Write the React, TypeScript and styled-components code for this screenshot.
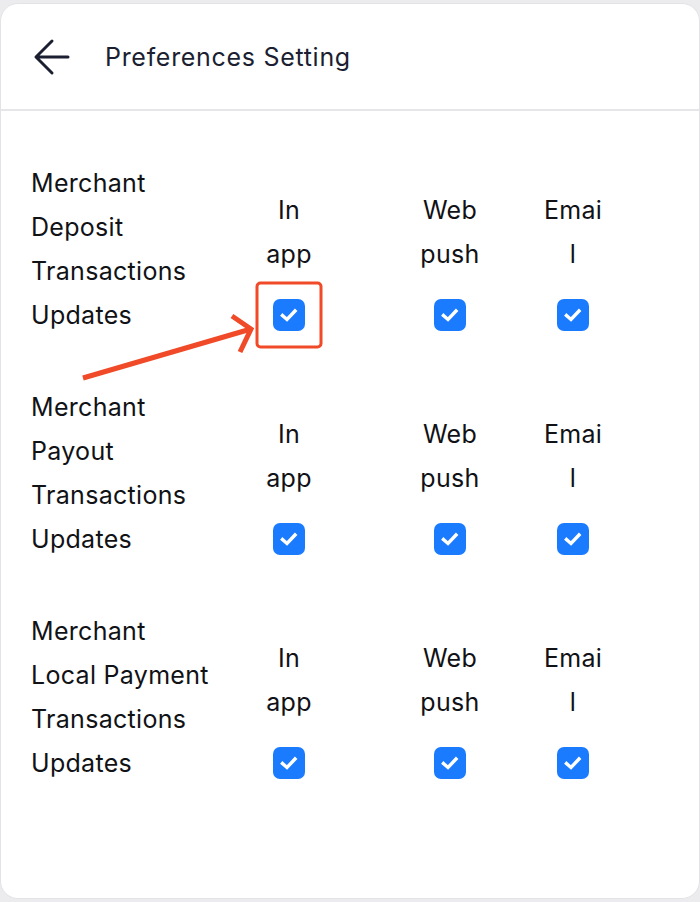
import React from "react";
import styled, { createGlobalStyle } from "styled-components";

const Global = createGlobalStyle`
  html, body { margin: 0; padding: 0; background: #ececef; }
  body { font-family: Inter, "Liberation Sans", sans-serif; }
  * { box-sizing: border-box; }
`;

const Card = styled.div`
  position: relative;
  margin-top: 3px;
  height: 896px;
  background: #fff;
  border: 1px solid #e3e3e7;
  border-radius: 18px;
  overflow: hidden;
`;

const Header = styled.div`
  height: 107px;
  display: flex;
  align-items: center;
  padding-left: 32px;
  gap: 34px;
  border-bottom: 2px solid #e6e6ea;
`;

const BackButton = styled.button`
  width: 38px;
  height: 38px;
  border: 0;
  padding: 0;
  background: transparent;
  display: flex;
  align-items: center;
  justify-content: center;
  color: #1b1f31;
`;

const Title = styled.h1`
  margin: 0;
  font-size: 25px;
  font-weight: 400;
  color: #1b1f31;
  letter-spacing: 0.7px;
`;

const List = styled.div`
  display: flex;
  flex-direction: column;
  gap: 48px;
  padding: 50px 0 0 30px;
`;

const Row = styled.div`
  display: flex;
  align-items: flex-end;
`;

const Label = styled.div`
  width: 197px;
  font-size: 25px;
  line-height: 44px;
  color: #111216;
  letter-spacing: 0.3px;
`;

const Column = styled.div<{ $ml: number }>`
  width: 66px;
  margin-left: ${(p) => p.$ml}px;
  display: flex;
  flex-direction: column;
  align-items: center;
`;

const ColText = styled.div`
  font-size: 25px;
  line-height: 44px;
  color: #111216;
  text-align: center;
  word-break: break-all;
  letter-spacing: 0.3px;
`;

const CheckCell = styled.div`
  position: relative;
  height: 60px;
  display: flex;
  align-items: center;
  justify-content: center;
  margin-top: 9px;
  margin-bottom: -8px;
`;

const Box = styled.span`
  width: 32px;
  height: 32px;
  border-radius: 7px;
  background: #1a7bff;
  display: flex;
  align-items: center;
  justify-content: center;
`;

const Highlight = styled.span`
  position: absolute;
  left: 50%;
  top: 50%;
  width: 67px;
  height: 67px;
  transform: translate(-50%, -50%);
  border: 3px solid #f04a28;
  border-radius: 5px;
  pointer-events: none;
`;

const Annotation = styled.svg`
  position: absolute;
  left: 0;
  top: 0;
  pointer-events: none;
`;

const Check = () => (
  <Box>
    <svg width="22" height="22" viewBox="0 0 22 22">
      <path d="M4.5 11.5 L9 15.5 L17 7" fill="none" stroke="#fff" strokeWidth="3.4" strokeLinecap="square" />
    </svg>
  </Box>
);

const rows = [
  ["Merchant", "Deposit", "Transactions", "Updates"],
  ["Merchant", "Payout", "Transactions", "Updates"],
  ["Merchant", "Local Payment", "Transactions", "Updates"],
];

const cols = [
  { lines: ["In", "app"], ml: 28 },
  { lines: ["Web", "push"], ml: 95 },
  { lines: ["Emai", "l"], ml: 57 },
];

export default function App() {
  return (
    <>
      <Global />
      <Card>
        <Header>
          <BackButton aria-label="Back">
            <svg width="38" height="38" viewBox="0 0 38 38">
              <path d="M4 19 H35 M19 3 L3 19 L19 35" fill="none" stroke="currentColor" strokeWidth="3" strokeLinecap="round" strokeLinejoin="round" />
            </svg>
          </BackButton>
          <Title>Preferences Setting</Title>
        </Header>
        <List>
          {rows.map((r, i) => (
            <Row key={i}>
              <Label>
                {r.map((l) => (
                  <div key={l}>{l}</div>
                ))}
              </Label>
              {cols.map((c, j) => (
                <Column key={j} $ml={c.ml}>
                  {c.lines.map((t) => (
                    <ColText key={t}>{t}</ColText>
                  ))}
                  <CheckCell>
                    <Check />
                    {i === 0 && j === 0 && <Highlight />}
                  </CheckCell>
                </Column>
              ))}
            </Row>
          ))}
        </List>
        <Annotation width="700" height="900" viewBox="0 0 700 900">
          <g fill="none" stroke="#f04a28" strokeWidth="5" strokeLinecap="butt" strokeLinejoin="miter">
            <path d="M82 374 L250 325" />
            <path d="M231 312 L250 325 L239 348" />
          </g>
        </Annotation>
      </Card>
    </>
  );
}
